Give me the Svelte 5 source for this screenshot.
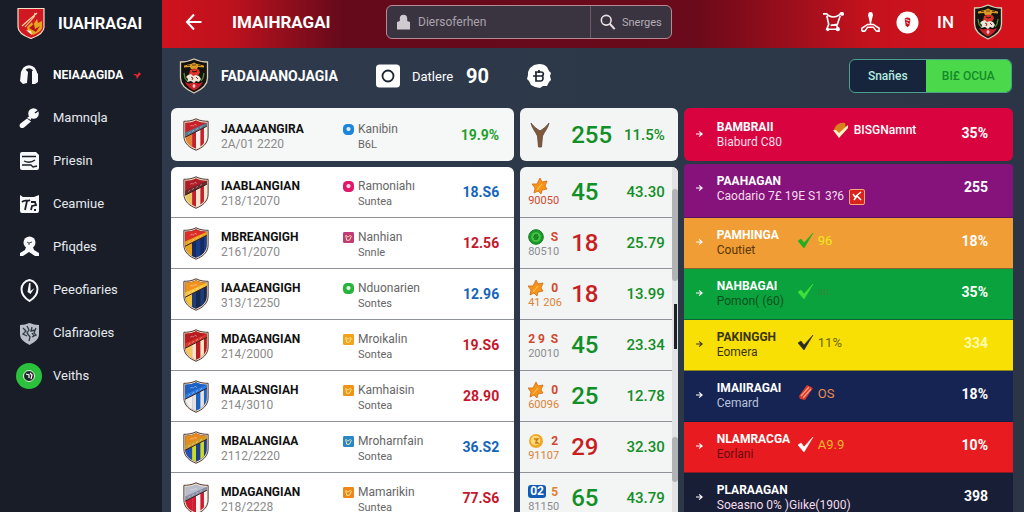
<script>
  const nav = [
    { icon: 'head', label: 'NEIAAAGIDA', active: true },
    { icon: 'wrench', label: 'Mamnqla' },
    { icon: 'box', label: 'Priesin' },
    { icon: 'tag', label: 'Ceamiue' },
    { icon: 'user', label: 'Pfiqdes' },
    { icon: 'clock', label: 'Peeofiaries' },
    { icon: 'shield', label: 'Clafiraoies' },
    { icon: 'green', label: 'Veiths' }
  ];

  const featured = { name: 'JAAAAANGIRA', date: '2A/01 2220', tag: 'Kanibin', sub: 'B6L', value: '19.9%', tone: 'green', badge: ['#1c86dc', 'round'], crest: ['#c8202a', '#5a7890', '#e0843a', '#f4f0ea', '#c8202a'] };

  const teams = [
    { name: 'IAABLANGIAN', date: '218/12070', tag: 'Ramoniahı', sub: 'Suntea', value: '18.S6', tone: 'blue', badge: ['#e0186a', 'round'], crest: ['#b01c28', '#6a2a2c', '#e8c860', '#f6e6d0', '#c4202c'] },
    { name: 'MBREANGIGH', date: '2161/2070', tag: 'Nanhian', sub: 'Snnle', value: '12.56', tone: 'red', badge: ['#c23a78', 'square'], crest: ['#dc2e26', '#e8a41e', '#e8a41e', '#1a3c86', '#142a60'] },
    { name: 'IAAAEANGIGH', date: '313/12250', tag: 'Nduonarien', sub: 'Sontes', value: '12.96', tone: 'blue', badge: ['#27b43a', 'round'], crest: ['#f0921e', '#f6c43c', '#f2c43a', '#16284e', '#1d3c78'] },
    { name: 'MDAGANGIAN', date: '214/2000', tag: 'Mroıkalin', sub: 'Sontea', value: '19.S6', tone: 'red', badge: ['#f3a21c', 'square'], crest: ['#b81c20', '#d8382a', '#f4c864', '#b81c20', '#f6e4c8'] },
    { name: 'MAALSNGIAH', date: '214/3010', tag: 'Kamhaisin', sub: 'Sontea', value: '28.90', tone: 'red', badge: ['#f09418', 'square'], crest: ['#1c62c4', '#2e7ae0', '#f2f0ee', '#1c62c4', '#e8e0dc'] },
    { name: 'MBALANGIAA', date: '2112/2220', tag: 'Mroharnfain', sub: 'Sontea', value: '36.S2', tone: 'blue', badge: ['#2a86c8', 'square'], crest: ['#e48a1e', '#c8a02a', '#2450b0', '#1e3e90', '#c8dc28'] },
    { name: 'MDAGANGIAN', date: '218/2228', tag: 'Mamarikin', sub: 'Suntea', value: '77.S6', tone: 'red', badge: ['#f0861a', 'square'], crest: ['#b8bccc', '#8890a8', '#d01c30', '#f8f4f4', '#d01c30'] }
  ];

  const scores = [
    { icon: 'leaf', code: '90050', tone: 'rust', count: '45', up: true, pct: '43.30' },
    { icon: 'coin', side: 'S', code: '80510', tone: 'grey', count: '18', up: false, pct: '25.79' },
    { icon: 'leaf', side: '0', code: '41 206', tone: 'amber', count: '18', up: false, pct: '13.99' },
    { icon: 'digits', side: 'S', code: '20010', tone: 'grey', count: '45', up: true, pct: '23.34' },
    { icon: 'leaf', side: '0', code: '60096', tone: 'amber', count: '25', up: true, pct: '12.78' },
    { icon: 'gold', side: '2', code: '91107', tone: 'amber', count: '29', up: false, pct: '32.30' },
    { icon: 'blue', side: '5', code: '81150', tone: 'grey', count: '65', up: true, pct: '43.79' }
  ];

  const ranks = [
    { bg: 'crimson', name: 'BAMBRAII', sub: 'Biaburd C80', mark: 'fruit', note: 'BISGNamnt', value: '35%' },
    { bg: 'purple', name: 'PAAHAGAN', sub: 'Caodario 7£ 19E S1 3?6', stamp: true, value: '255' },
    { bg: 'orange', name: 'PAMHINGA', sub: 'Coutiet', mark: 'green', note: '96', value: '18%' },
    { bg: 'emerald', name: 'NAHBAGAI', sub: 'Pomon( (60)', mark: 'lime', note: 'au', value: '35%' },
    { bg: 'yellow', name: 'PAKINGGH', sub: 'Eomera', mark: 'dark', note: '11%', value: '334' },
    { bg: 'navy', name: 'IMAIIRAGAI', sub: 'Cemard', mark: 'book', note: 'OS', value: '18%' },
    { bg: 'red', name: 'NLAMRACGA', sub: 'Eorlani', mark: 'white', note: 'A9.9', value: '10%' },
    { bg: 'ink', name: 'PLARAAGAN', sub: 'Soeasno 0% )Giıke(1900)', value: '398' }
  ];
  const checkColours = { green: '#1fae22', lime: '#3fe03a', dark: '#2a2a22', white: '#ffffff' };
</script>

{#snippet crest(c)}
  <svg class="crest" viewBox="0 0 28 34" aria-hidden="true">
    <path d="M14 .8C10 3 5 3.400 1.500 3.400v15C1.500 26 7 30.500 14 33.200 21 30.500 26.500 26 26.500 18.400v-15C23 3.400 18 3 14 .8Z" fill="#f4e2c0" stroke="#4a3434" stroke-width="1" />
    <path d="M14 2.400C10 4.400 6.500 4.800 2.800 4.800v13.600c0 6.700 4.700 10.800 11.200 13.400 6.500-2.600 11.200-6.700 11.200-13.400V4.800C21.500 4.800 18 4.400 14 2.400Z" fill={c[3]} />
    <path d="M3 18 10 15v15c-4-2.200-7-6-7-11.500Z" fill={c[2]} />
    <path d="M10 14.500 14 12v19.600c-1.600-.6-2.800-1.200-4-2ZM18.500 9h3.700v17c-1 1.300-2.200 2.400-3.700 3.400Z" fill={c[4]} />
    <path d="M2.800 4.800c4 0 7.500-.4 11.200-2.400 3.700 2 7.200 2.400 11.200 2.400v2.300L2.800 19.500Z" fill={c[0]} />
    <path d="M2.800 15 25.200 4.800v3.700L2.800 19.800Z" fill={c[1]} />
    <path d="M2.800 19.800 25.200 8.500" stroke="#3a2020" stroke-width="1" />
    <path d="M8 8.500l2-1 1 1 2-2 2 1.200M6 16l2-1.500M10 14l2-1.500M14 12l2-1.500M18 10l2-1.500" fill="none" stroke="#fff" stroke-opacity=".5" stroke-width=".8" />
  </svg>
{/snippet}

{#snippet blackCrest()}
  <svg class="crest black" viewBox="0 0 30 36" aria-hidden="true">
    <path d="M15 1C11 3 6 4 1.500 4v16c0 7 5.500 11.500 13.500 15 8-3.500 13.500-8 13.500-15V4C24 4 19 3 15 1Z" fill="#15130f" stroke="#d9cdb4" stroke-width="1.300" />
    <path d="M6 24c2 4 5 6.500 9 8.500 4-2 7-4.500 9-8.500l-4 1.500-5-1-5 1Z" fill="#c9202a" />
    <path d="M5 7.500l7-1.500 3-1.500L18 6l7 1.500v2l-6-.5-1 2h-6l-1-2-6 .5Z" fill="#d99a26" />
    <path d="M8 7.500h3M13 7h4M19 7.500h3" stroke="#4a3010" stroke-width=".8" />
    <path d="M11 12l4-1.500 5 1 1 3-2 3-5 1-4-2Z" fill="#d93426" />
    <path d="M9 17l3-1 2 2 3-1 3 1 2 3-2 3-3-1-2 2-3-2-4 1 1-3-2-2Z" fill="#efe6da" />
    <path d="M12 19l2 1-1 2M17 19l2 2" fill="none" stroke="#8b2a22" stroke-width="1" />
    <path d="M5 15l1 5 2 3M25 15l-1 5-2 3" stroke="#4f8d34" stroke-width="1.300" fill="none" />
    <path d="M13 13l2 1 3-1" stroke="#15130f" stroke-width="1" fill="none" />
    <path d="M15 26v4M13.500 28h3" stroke="#fff" stroke-width="1" />
  </svg>
{/snippet}

{#snippet navIcon(k)}
  <svg class="nav-icon" viewBox="0 0 28 28" aria-hidden="true" fill="#f7f8fa">
    {#if k === 'head'}
      <path d="M7.500 14C7 3 21 3 20.500 14" fill="none" stroke="#f7f8fa" stroke-width="3" />
      <path d="M6 11l4-3 3 3-1 11-4 1-3-3ZM17 10l3-1 3 4v8l-3 2h-3Z" />
    {:else if k === 'wrench'}
      <circle cx="18.500" cy="9.500" r="5.300" />
      <path d="M5.500 19.500 12 14.500l4 3-7 6c-3 2-6-1.500-3.500-4Z" />
      <path d="m12 14 4-3v5Z" /><path d="m24 6-4 3" stroke="#181d28" stroke-width="1.500" />
    {:else if k === 'box'}
      <path d="M7 5h14l3 3v13q0 2-2 2H7q-2 0-2-2V7q0-2 2-2Z" />
      <path d="M7 9.500h14M9 14c4 2 7 2 11-1M7 18h9l2 2 4-1" fill="none" stroke="#181d28" stroke-width="1.300" />
    {:else if k === 'tag'}
      <path d="m5 5 3 2h11l5-2v16q0 2-2 2H7q-2 0-2-2Z" />
      <path d="M7 12c3-3 5 0 8-2M12 11l-2 9M16 12h4l1 3-4 1-1 4M19 20h2" fill="none" stroke="#181d28" stroke-width="1.800" />
    {:else if k === 'user'}
      <circle cx="14.500" cy="9.500" r="6" />
      <path d="M11 14h7l1 3 5 3v3h-4l-6-4-6 4H5v-3l5-3Z" />
      <path d="m12 9 2 1 3-1M14 10v2" stroke="#181d28" fill="none" stroke-width=".8" />
    {:else if k === 'clock'}
      <path d="M14.500 4c5 1 8 5 8 9 0 5-3 9-8 12-5-3-8-7-8-12 0-4 3-8 8-9Z" fill="none" stroke="#f7f8fa" stroke-width="2" />
      <path d="M14 7h1.500v8l4-3-4 6-3-2Z" />
    {:else if k === 'shield'}
      <path d="M5 6c4 0 6-1 9.500-2C18 5 20 6 24 6v9c0 5-4 8-9.500 11C9 23 5 20 5 15Z" fill="#b8bdc6" />
      <path d="m8 9 3 3-3 3 4 2M12 7l2 4-2 3 3 4-1 4M17 8l-1 4 4-1M21 9l-2 5 2 2-4 2M17 14l2 3" fill="none" stroke="#323946" stroke-width="1.300" />
    {:else}
      <circle cx="14" cy="14" r="13" fill="#2cc13c" />
      <circle cx="14" cy="14" r="5.500" fill="#20262a" stroke="#dff4e0" />
      <path d="m11 12 3 1v3M15 11l2 2-1 4" stroke="#fff" stroke-width="1.200" fill="none" />
    {/if}
  </svg>
{/snippet}

{#snippet teamTable(rows, extra)}
  <table class="panel teams {extra}">
    <tbody>
      {#each rows as t}
        <tr>
          <td class="c-crest">{@render crest(t.crest)}</td>
          <td class="c-name"><div class="name">{t.name}</div><div class="date">{t.date}</div></td>
          <td class="c-tag">
            <div class="tag">
              <svg class="badge" viewBox="0 0 12 12" aria-hidden="true">
                <rect width="12" height="12" rx={t.badge[1] === 'round' ? 4.5 : 1.5} fill={t.badge[0]} />
                {#if t.badge[1] === 'round'}
                  <circle cx="6" cy="5.500" r="2.300" fill="#fff" fill-opacity=".85" />
                {:else}
                  <path d="M3 4c1-1 1 2 3 1s2-2 3 0L7 9H4Z" fill="none" stroke="#fff1a0" stroke-width="1" />
                {/if}
              </svg>
              <div><div class="tag-name">{t.tag}</div><div class="tag-sub">{t.sub}</div></div>
            </div>
          </td>
          <td class="c-value {t.tone}">{t.value}</td>
        </tr>
      {/each}
    </tbody>
  </table>
{/snippet}

<div class="app">
  <aside>
    <a class="brand" href="#home">
      <svg viewBox="0 0 28 32" aria-hidden="true">
        <path d="M1 1.500h26V20c0 5-6 9-13 11.500C7 29 1 25 1 20Z" fill="#d01822" stroke="#f3dfc8" stroke-width="1.200" />
        <path d="m10 20 5-5 1 3 4-6 1 4 4-2v6c0 4-5 6-9 8l-5-3Z" fill="#e6a51e" />
        <path d="m5 19 8-7 7-6M8 20l9-10 1-4" fill="none" stroke="#ffd9a0" stroke-width="1.100" />
        <path d="m12 21 5-4 1 5 5-3-4 6Z" fill="#b3141c" /><path d="m9 23 5 1 1 4Z" fill="#f8f0d0" />
      </svg>
      <span>IUAHRAGAI</span>
    </a>
    <nav>
      {#each nav as n}
        <a href="#section" class:active={n.active}>
          {@render navIcon(n.icon)}<span>{n.label}</span>
          {#if n.active}<svg class="pin" viewBox="0 0 8 8" aria-hidden="true"><path d="m0 3 3 0 1 1 2-3 2 2-2 2-2 3-1-3Z" fill="#e0262e" /></svg>{/if}
        </a>
      {/each}
    </nav>
  </aside>

  <div class="page">
    <header>
      <button class="back" aria-label="Back">
        <svg viewBox="0 0 18 18"><path d="M9 1.500 2 9l7 7.500M2 9h14.500" fill="none" stroke="#fff" stroke-width="2" /></svg>
      </button>
      <h1>IMAIHRAGAI</h1>
      <form class="search">
        <label class="field">
          <svg viewBox="0 0 14 16" aria-hidden="true"><path d="M3 7V4c0-5 8-5 8 0v3l3 1v8H0V8Z" fill="#cfc9d0" /></svg>
          <input type="text" placeholder="Diersoferhen" aria-label="Diersoferhen" />
        </label>
        <button type="button">
          <svg viewBox="0 0 18 18" aria-hidden="true"><circle cx="7" cy="7" r="5.500" fill="none" stroke="#e8e2e6" stroke-width="1.800" /><path d="m11 11 5.500 6" stroke="#e8e2e6" stroke-width="2.200" /></svg>
          <span>Snerges</span>
        </button>
      </form>
      <div class="actions">
        <a href="#cart" aria-label="Cart"><svg viewBox="0 0 24 24"><path d="M1 3h4l2 2c4 2 7 2 11-1l2-2h2M5 5l2 9-2 5h10M19 5l-3 9-7 1M15 14l2 5" fill="none" stroke="#fff" stroke-width="1.700" /><circle cx="21" cy="3" r="2" fill="#fff" /><circle cx="16.500" cy="19" r="2.200" fill="#fff" /><circle cx="6" cy="19.500" r="1.500" fill="#fff" /></svg></a>
        <a href="#profile" aria-label="Profile"><svg viewBox="0 0 24 24"><path d="M12 1q2.500 0 2.500 3.500L13 11h-2L9.500 4.500Q9.500 1 12 1Z" fill="#fff" /><path d="M12 10v4M3 21v-3l6-4h6l6 4v3h-3M3 21h3l3-4h6l3 4" fill="none" stroke="#fff" stroke-width="1.600" /></svg></a>
        <a href="#club" aria-label="Club"><svg viewBox="0 0 24 24"><circle cx="12" cy="12" r="11.500" fill="#fff" /><path d="M9 8c2-2 6-1 6 1l-1 6-2 2-2-2Z" fill="#c41520" /><path d="m10 9 4 1M11 12l2 1" stroke="#fff" /></svg></a>
        <a class="lang" href="#language">IN</a>
        {@render blackCrest()}
      </div>
    </header>

    <section class="sub">
      {@render blackCrest()}
      <h2>FADAIAANOJAGIA</h2>
      <svg class="square" viewBox="0 0 24 24" aria-hidden="true"><rect width="24" height="23" y=".5" rx="3.500" fill="#fff" /><circle cx="12" cy="12" r="5.500" fill="none" stroke="#1c2430" stroke-width="1.800" /></svg>
      <span class="label">Datlere</span>
      <strong>90</strong>
      <svg class="seal" viewBox="0 0 24 24" aria-hidden="true"><path d="M12 0c4 0 6 1 8 3l2 4 2 2-1 3 1 4-2 2-2 4-4 0-3 2-5-1-4-2-2-4-2-2 1-4 0-3 2-4 4-3Z" fill="#fff" /><path d="M8 8h6c3 0 3 3 1 4 2 1 1 5-1 5H9V8M6 12h10M12 6v3" fill="none" stroke="#1c2430" stroke-width="1.700" /></svg>
      <div class="switch">
        <button type="button">Snañes</button><button type="button" class="on">BI£ OCUA</button>
      </div>
    </section>

    <main>
      <div class="col">
        {@render teamTable([featured], 'single')}
        {@render teamTable(teams, 'list')}
      </div>

      <div class="col">
        <table class="panel scores single">
          <tbody><tr>
            <td class="c-icon"><svg class="antler" viewBox="0 0 20 26" aria-hidden="true"><path d="M1 1c1 5 4 8 6.500 13l1 11h3l1-11C15 9 18 6 19 1c-3 4-6 6-9 8C7 7 4 5 1 1Z" fill="#80583c" stroke="#5c4434" stroke-width=".8" /></svg></td>
            <td class="c-count up">255</td><td class="c-pct">11.5%</td>
          </tr></tbody>
        </table>
        <div class="scroll">
          <table class="panel scores list">
            <tbody>
              {#each scores as s}
                <tr>
                  <td class="c-icon">
                    <div class="mini">
                      {#if s.icon === 'leaf'}
                        <svg viewBox="0 0 16 16" aria-hidden="true"><path d="m8 0 2 4 5-1-2 5 2 3-5 1-1 4-3-3-4 2 1-5-3-4 5 0Z" fill="#f5951c" stroke="#d46a10" stroke-width=".8" /><path d="m5 12 5-6" stroke="#ffce58" /></svg>
                      {:else if s.icon === 'coin'}
                        <svg viewBox="0 0 16 16" aria-hidden="true"><circle cx="8" cy="8" r="7.300" fill="#1e9a2c" stroke="#0f7a20" /><circle cx="8" cy="8" r="4.800" fill="#45c443" /><path d="M10 6H7l-1 2h4l-1 2H6" fill="none" stroke="#0f7a20" stroke-width="1.300" /></svg>
                      {:else if s.icon === 'gold'}
                        <svg viewBox="0 0 16 16" aria-hidden="true"><circle cx="8" cy="8" r="7" fill="#f0a824" /><circle cx="7.500" cy="7.500" r="4.800" fill="#ffd978" /><path d="M6 6h4L8 8l2 2H7" fill="none" stroke="#c87c14" stroke-width="1.300" /></svg>
                      {:else if s.icon === 'blue'}
                        <b class="chip">02</b>
                      {:else}
                        <b class="rust">2 9</b>
                      {/if}
                      {#if s.side}<b class={s.icon === 'blue' ? 'amber' : 'rust'}>{s.side}</b>{/if}
                    </div>
                    <div class="code {s.tone}">{s.code}</div>
                  </td>
                  <td class="c-count" class:up={s.up}>{s.count}</td>
                  <td class="c-pct">{s.pct}</td>
                </tr>
              {/each}
            </tbody>
          </table>
          <div class="track" aria-hidden="true"><i></i><i class="dark"></i><i></i></div>
        </div>
      </div>

      <ul class="ranks">
        {#each ranks as r}
          <li class={r.bg}>
            <svg class="arrow" viewBox="0 0 8 8" aria-hidden="true"><path d="M0 4h6M3.500 1 7 4 3.500 7" fill="none" stroke="currentColor" stroke-width="1.300" /></svg>
            <div class="who">
              <div class="rank-name">{r.name}</div>
              <div class="rank-sub">{r.sub}
                {#if r.stamp}<svg class="stamp" viewBox="0 0 16 16" aria-hidden="true"><rect x=".5" y=".5" width="15" height="15" rx="1.500" fill="#d8241c" stroke="#f6a878" /><path d="m4 5 2 3 6-5M5 11l3-4 4 4" fill="none" stroke="#fff" stroke-width="1.500" /></svg>{/if}
              </div>
            </div>
            {#if r.mark}
              <div class="note">
                <svg viewBox="0 0 16 16" aria-hidden="true">
                  {#if r.mark === 'fruit'}
                    <path d="M1 8c1-5 6-8 11-7l1 5-7 7Z" fill="#d9821c" /><path d="m0 8 3 0 3 3 9-8v3l-9 10Z" fill="#fff4c8" />
                  {:else if r.mark === 'book'}
                    <path d="M1 11 9 0l6 3-8 12-5-1Z" fill="#d8382c" /><path d="m3 11 8-9M5 13l8-9" stroke="#f6a080" stroke-width="1.200" />
                  {:else}
                    <path d="m0 9 3-2 3 4 9-10-9 15Z" fill={checkColours[r.mark]} stroke={checkColours[r.mark]} stroke-width=".6" />
                  {/if}
                </svg>
                <span>{r.note}</span>
              </div>
            {/if}
            <b class="score">{r.value}</b>
          </li>
        {/each}
      </ul>
    </main>
  </div>
</div>

<style>
  :global(body) { margin: 0; background: #2c3647; }
  * { box-sizing: border-box; }
  .app { display: flex; height: 100vh; overflow: hidden; font-family: Roboto, "Liberation Sans", sans-serif; font-size: 13px; color: #fff; }
  a { color: inherit; text-decoration: none; }
  button { font: inherit; color: inherit; border: 0; background: none; padding: 0; }
  svg { display: block; flex: none; }
  h1, h2 { margin: 0; font-weight: 700; }
  table { border-collapse: separate; border-spacing: 0; table-layout: fixed; width: 100%; }
  td { padding: 0; }

  aside { flex: none; width: 162px; background: #181d28; }
  .brand { display: flex; align-items: center; gap: 13px; height: 46px; padding-left: 17px; font-size: 16px; font-weight: 700; }
  .brand svg { width: 28px; height: 32px; }
  nav { display: flex; flex-direction: column; padding-top: 7px; }
  nav a { display: flex; align-items: center; gap: 10px; height: 43px; padding-left: 15px; font-size: 13px; color: #e6e9ee; }
  nav a.active { font-size: 12px; font-weight: 700; color: #fff; }
  .nav-icon { width: 28px; height: 28px; }
  .pin { width: 8px; height: 8px; }

  .page { flex: 1; min-width: 0; display: flex; flex-direction: column; background: linear-gradient(90deg, #2e3a4c, #2b3545); }
  header { flex: none; display: flex; align-items: center; height: 48px; padding: 0 20px 4px 23px; background: linear-gradient(90deg, #d0121d, #bd121d 8%, #640a1b 21%, #6a0a1a 62%, #c5121d 82%, #d4121c); }
  .back svg { width: 18px; height: 18px; }
  h1 { width: 155px; padding-left: 29px; font-size: 17px; }
  .back { width: 18px; }
  .search { flex: 1; max-width: 286px; margin-left: 28px; display: flex; height: 34px; background: #3a3440; border: 1px solid #b58a94; border-radius: 6px; color: #b3adb6; }
  .field { flex: 1; display: flex; align-items: center; gap: 8px; padding-left: 10px; min-width: 0; }
  .field svg { width: 13px; height: 16px; }
  .field input { flex: 1; min-width: 0; border: 0; padding: 0; outline: 0; background: none; font: inherit; font-size: 12px; color: inherit; }
  .field input::placeholder { color: #a9a3ad; opacity: 1; }
  .search button { display: flex; align-items: center; gap: 6px; width: 81px; padding-left: 9px; border-left: 1px solid #6c5c68; font-size: 11px; }
  .search button svg { width: 16px; height: 18px; }
  .actions { margin-left: auto; display: flex; align-items: center; gap: 14px; }
  .actions a svg { width: 23px; height: 23px; }
  .lang { font-size: 17px; font-weight: 500; padding: 0 4px; }
  .crest { width: 28px; height: 33px; }
  .crest.black { width: 32px; height: 36px; }

  .sub { flex: none; display: flex; align-items: center; height: 60px; padding: 0 12px 4px 16px; }
  h2 { padding-left: 11px; width: 151px; font-size: 14px; white-space: nowrap; }
  .square { width: 24px; height: 24px; margin-left: 15px; }
  .label { margin-left: 12px; width: 54px; font-size: 13px; }
  .sub strong { font-size: 20px; width: 61px; }
  .seal { width: 24px; height: 24px; }
  .switch { margin-left: auto; display: flex; width: 163px; height: 34px; border: 1px solid #4aa08c; border-radius: 6px; overflow: hidden; background: #16243c; font-size: 12px; font-weight: 500; color: #b4ece0; }
  .switch button { flex: 76; }
  .switch .on { flex: 86; background: #4bd94b; color: #168a2a; }

  main { flex: 1; min-height: 0; display: grid; grid-template-columns: 344fr 158fr 330fr; align-items: start; column-gap: 6px; padding: 0 11px 0 9px; }
  .panel { background: #fff; border-radius: 6px; }
  .single { height: 53px; margin-bottom: 6px; background: #f6f7f7; }
  .list { border-bottom-left-radius: 0; border-bottom-right-radius: 0; }
  .list tr { height: 51px; }
  .list td { border-bottom: 1px solid #8f9296; height: 51px; }
  .c-crest { width: 50px; padding-left: 11px; }
  .c-name { width: 122px; }
  .name { line-height: 15px; padding-top: 4px; font-size: 12px; font-weight: 700; color: #101010; }
  .date { line-height: 15px; font-size: 12px; color: #8a8a8a; }
  .tag { display: flex; gap: 4px; padding-top: 4px; font-size: 12px; line-height: 15px; color: #666; }
  .badge { width: 11px; height: 11px; margin-top: 2px; }
  .tag-sub { font-size: 11px; }
  .c-value { width: 60px; padding-right: 15px; text-align: right; font-size: 14px; font-weight: 700; }
  .green { color: #1fa12c; }
  .blue { color: #1464bc; }
  .c-value.red { color: #c4162c; }

  .scores { background: #f3f4f4; }
  .c-icon { width: 51px; padding-left: 8px; }
  .antler { width: 20px; height: 26px; margin-left: 2px; }
  .c-count { color: #c81e1e; font-size: 24px; font-weight: 500; }
  .c-count.up { color: #128f26; }
  .c-pct { width: 58px; padding-right: 13px; text-align: right; color: #128f26; font-size: 15px; font-weight: 500; }
  .mini { display: flex; align-items: center; justify-content: space-between; width: 30px; height: 16px; font-size: 12px; line-height: 16px; }
  .mini svg { width: 16px; height: 16px; }
  .mini svg:only-child { margin-left: 4px; }
  .chip { background: #1459b4; color: #fff; padding: 0 2px; line-height: 13px; border-radius: 3px; }
  .code { font-size: 11px; line-height: 13px; }
  .rust { color: #cf4a30; }
  .amber { color: #de8234; }
  .grey { color: #8b8d90; }
  .scroll { position: relative; }
  .track { position: absolute; top: 0; right: 0; width: 6px; height: 100%; padding-top: 22px; display: flex; flex-direction: column; background: #e2e3e4; border-radius: 0 6px 0 0; }
  .track i { width: 6px; height: 92px; border-radius: 3px; background: #b2b3b4; }
  .track i.dark { width: 3px; height: 45px; margin: 23px 0 88px 2px; border-radius: 0; background: #1d2026; }
  .track i:last-child { height: 45px; }

  .ranks { list-style: none; margin: 0; padding: 0; }
  .ranks li { display: flex; align-items: flex-start; height: 51px; padding: 9px 25px 0 12px; border-bottom: 1px solid rgba(20, 25, 50, .45); color: #fff; }
  .ranks .crimson { height: 53px; margin-bottom: 3px; padding-top: 11px; border: 0; border-radius: 6px; background: #d9043f; }
  .ranks .purple { height: 54px; background: #86127c; border-radius: 4px 4px 0 0; }
  .ranks .orange { background: #ef9d34; }
  .ranks .emerald { background: #0aa23c; }
  .ranks .yellow { background: #f9e004; }
  .ranks .navy { background: #152452; }
  .ranks .red { background: #e81c20; }
  .ranks .ink { background: #171e36; }
  .arrow { width: 7px; height: 8px; margin: 11px 14px 0 0; }
  .who { min-width: 79px; white-space: nowrap; }
  .rank-name { font-size: 12px; font-weight: 700; line-height: 16px; }
  .rank-sub { display: flex; align-items: center; gap: 5px; font-size: 12px; line-height: 15px; height: 15px; color: #f4dcea; }
  .stamp { width: 16px; height: 16px; }
  .orange .rank-sub { color: #5a3608; }
  .emerald .rank-sub { color: #04501f; }
  .yellow .rank-name, .yellow .rank-sub, .yellow .arrow { color: #3a3408; }
  .navy .rank-sub { color: #b8c2dc; }
  .red .rank-sub { color: #6a0a10; }
  .note { display: flex; align-items: center; gap: 4px; margin: 4px 0 0 2px; height: 18px; font-size: 13px; }
  .crimson .note { margin: 2px 0 0 37px; gap: 5px; font-size: 12px; font-weight: 500; }
  .note svg { width: 16px; height: 16px; }
  .orange .note { color: #f2e81c; }
  .emerald .note { color: #2c8c3c; font-size: 10px; }
  .yellow .note { color: #6e6410; }
  .navy .note { color: #e88a50; }
  .red .note { color: #f6b428; }
  .score { margin: 5px 0 0 auto; font-size: 14px; line-height: 18px; font-weight: 700; }
  .yellow .score { color: #fffbb0; }
</style>
